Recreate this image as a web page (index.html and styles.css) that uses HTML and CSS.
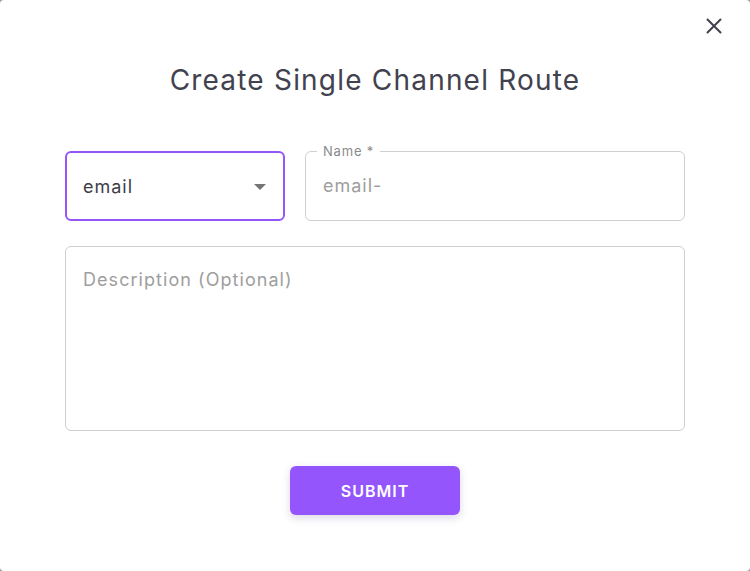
FILE: index.html
```html
<!DOCTYPE html>
<html lang="en">
<head>
<meta charset="utf-8">
<title>Create Single Channel Route</title>
<link rel="stylesheet" href="styles.css">
</head>
<body>
<div class="dialog">
  <div class="topbar">
    <button class="close" type="button" aria-label="Close">
      <svg width="16" height="16" viewBox="0 0 16 16"><path d="M1.5 1.5L14.5 14.5M14.5 1.5L1.5 14.5" stroke="#42424e" stroke-width="2" stroke-linecap="round" fill="none"/></svg>
    </button>
  </div>
  <h1 class="title">Create Single Channel Route</h1>
  <form class="form">
    <div class="row">
      <div class="select">
        <span class="select-value">email</span>
        <svg class="caret" width="12" height="6" viewBox="0 0 12 6"><path d="M0 0H12L6 6Z" fill="#757575"/></svg>
      </div>
      <fieldset class="field">
        <legend class="field-label">Name *</legend>
        <input class="field-input" type="text" placeholder="email-">
      </fieldset>
    </div>
    <textarea class="desc" placeholder="Description (Optional)"></textarea>
    <button class="submit" type="button">SUBMIT</button>
  </form>
</div>
</body>
</html>
```
FILE: styles.css
```css
html, body {
  margin: 0;
  padding: 0;
  background: #9a9a9a;
}
body {
  font-family: Inter, "Noto Sans", sans-serif;
  width: 750px;
  height: 571px;
  overflow: hidden;
}
.dialog {
  width: 750px;
  height: 571px;
  background: #ffffff;
  border-radius: 4px;
  box-sizing: border-box;
  display: flex;
  flex-direction: column;
}
.topbar {
  display: flex;
  justify-content: flex-end;
  padding: 18px 28px 0 0;
  height: 16px;
}
.close {
  border: 0;
  background: none;
  padding: 0;
  width: 16px;
  height: 16px;
  display: block;
  cursor: pointer;
}
.close svg { display: block; }
.title {
  margin: 29px 0 0;
  text-align: center;
  font-size: 28px;
  line-height: 34px;
  font-weight: 400;
  letter-spacing: 1.2px;
  color: #42424e;
}
.form {
  display: flex;
  flex-direction: column;
  align-items: center;
  padding: 0 65px;
  margin-top: 46px;
}
.row {
  width: 100%;
  display: grid;
  grid-template-columns: 220px 1fr;
  column-gap: 20px;
  align-items: end;
}
.select {
  height: 70px;
  box-sizing: border-box;
  border: 2px solid #9455f9;
  border-radius: 6px;
  display: flex;
  align-items: center;
  justify-content: space-between;
  padding: 0 17px 0 16px;
  font-size: 18px;
  letter-spacing: 1px;
  color: #3d3d48;
}
.caret { display: block; margin-top: 1px; }
.field {
  margin: 0;
  min-width: 0;
  padding: 0 17px;
  border: 1px solid #cfcfcf;
  border-radius: 6px;
}
.field-label {
  padding: 0 6px;
  margin-left: -6px;
  font-size: 13px;
  line-height: 16px;
  letter-spacing: 0.8px;
  color: #8a8a8a;
}
.field-input {
  display: block;
  width: 100%;
  box-sizing: border-box;
  height: 61px;
  padding: 0 0 9px 0;
  border: 0;
  outline: none;
  font-family: inherit;
  font-size: 18px;
  letter-spacing: 1px;
  color: #3d3d48;
  background: transparent;
}
.field-input::placeholder { color: #9e9e9e; }
.desc {
  display: block;
  width: 100%;
  box-sizing: border-box;
  height: 185px;
  margin: 25px 0 0;
  padding: 21px 17px 17px;
  border: 1px solid #cfcfcf;
  border-radius: 6px;
  resize: none;
  outline: none;
  font-family: inherit;
  font-size: 18px;
  line-height: 24px;
  letter-spacing: 1.05px;
  color: #3d3d48;
}
.desc::placeholder { color: #9e9e9e; }
.submit {
  margin-top: 35px;
  width: 170px;
  height: 49px;
  border: 0;
  border-radius: 6px;
  background: #9455fd;
  color: #ffffff;
  font-family: inherit;
  font-size: 16px;
  font-weight: 600;
  letter-spacing: 1px;
  box-shadow: 0 3px 8px rgba(60, 40, 120, 0.18);
  cursor: pointer;
}
```
